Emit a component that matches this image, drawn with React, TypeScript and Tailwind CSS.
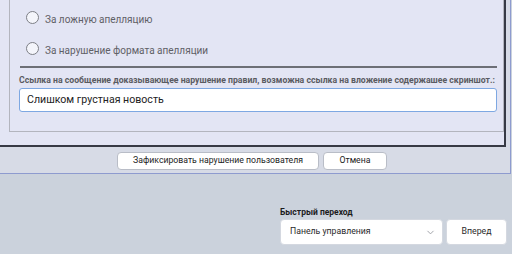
import { ChevronDown } from "lucide-react";

function Radio({ label }: { label: string }) {
    return (
        <label className="flex items-center gap-[6px] pl-[7px]">
            <span className="w-[13px] h-[13px] rounded-full border-[1.5px] border-[#7d7f86] bg-[#f4f5fb]" />
            <span className="text-[10px] text-[#5f6066] mt-[4px]">{label}</span>
        </label>
    );
}

export default function App() {
    return (
        <div className="w-[512px] h-[254px] overflow-hidden bg-[#cbd2dc] font-['Roboto',sans-serif]">
            <div className="w-[511px] h-[174px] border-r border-b border-[#8e9bcf] bg-[#d7dbe6]">
                <div className="w-[506px] h-[147px] border-r-2 border-b-2 border-[#373a45] bg-[#e3e5f4] pl-[9px] pb-[14px]">
                    <div className="h-[132px] border-l border-r border-b border-[#b3b5be] pl-[9px] pr-[6px]">
                        <div className="h-[34px] flex items-center">
                            <Radio label="За ложную апелляцию" />
                        </div>
                        <div className="h-[28px] flex items-center">
                            <Radio label="За нарушение формата апелляции" />
                        </div>
                        <div className="mt-[4px] ml-[1px] h-[2px] bg-[#6d6f76]" />
                        <div className="mt-[7px] h-[11px] leading-[11px] text-[8.7px] font-bold text-[#5a5b61] whitespace-nowrap">
                            Ссылка на сообщение доказывающее нарушение правил, возможна ссылка на вложение содержашее скриншот.:
                        </div>
                        <input
                            defaultValue="Слишком грустная новость"
                            className="mt-[1px] w-full h-[24px] bg-white border border-[#7ea8e2] rounded-[3px] px-[7px] text-[10.6px] text-[#222] outline-none"
                        />
                    </div>
                </div>
                <div className="flex gap-[4px] pl-[117px] pt-[5px]">
                    <button className="w-[202px] h-[18px] bg-white border border-[#b9bdc7] rounded-[4px] text-[8.7px] text-[#222]">
                        Зафиксировать нарушение пользователя
                    </button>
                    <button className="w-[64px] h-[18px] bg-white border border-[#b9bdc7] rounded-[4px] text-[8.7px] text-[#222]">
                        Отмена
                    </button>
                </div>
            </div>
            <div className="ml-[280px] mt-[33px]">
                <div className="h-[11px] leading-[11px] text-[8.5px] font-bold text-[#1c1c1e]">Быстрый переход</div>
                <div className="flex gap-[3px] mt-[1px]">
                    <div className="w-[163px] h-[26px] bg-white border border-[#d4d8e0] rounded-[4px] flex items-center justify-between pl-[9px] pr-[6px]">
                        <span className="text-[8.7px] text-[#2a2a2c]">Панель управления</span>
                        <ChevronDown className="w-[11px] h-[11px] text-[#9a9ca3]" />
                    </div>
                    <button className="w-[61px] h-[26px] bg-white border border-[#d4d8e0] rounded-[4px] text-[8.8px] text-[#2a2a2c]">
                        Вперед
                    </button>
                </div>
            </div>
        </div>
    );
}
